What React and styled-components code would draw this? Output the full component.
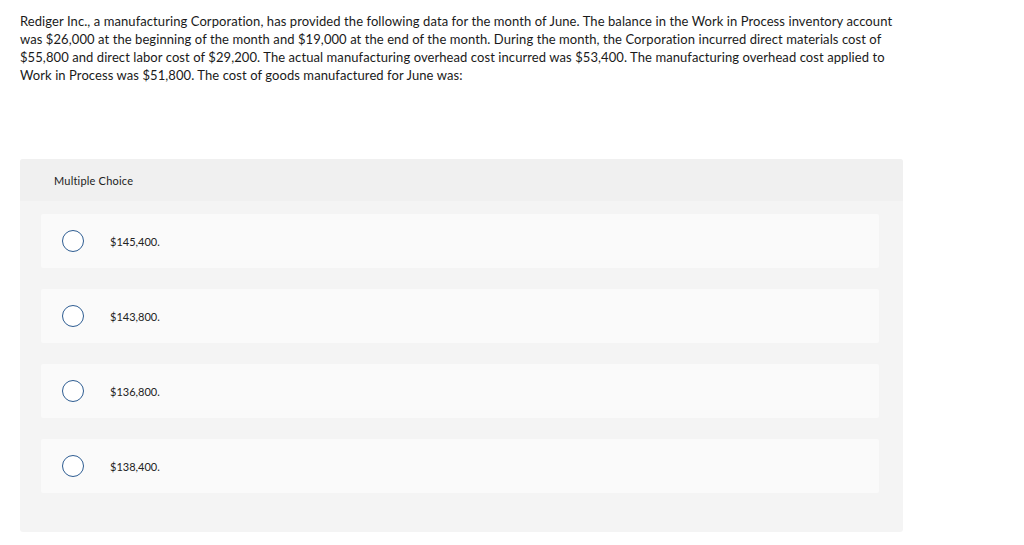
import styled, { createGlobalStyle } from "styled-components";

const GlobalStyle = createGlobalStyle`
  body {
    margin: 0;
    background: #ffffff;
    font-family: "Lato", "Liberation Sans", sans-serif;
    color: #1a1a1a;
  }
`;

const Page = styled.div`
  padding: 12px 20px 0 20px;
  width: 1024px;
  box-sizing: border-box;
`;

const Question = styled.p`
  margin: 0;
  width: 895px;
  font-size: 13px;
  line-height: 18px;
  letter-spacing: 0.08px;
  color: #1a1a1a;
`;

const Panel = styled.div`
  margin-top: 75px;
  width: 883px;
  background: #f4f4f4;
  border-radius: 3px;
  padding-bottom: 39px;
`;

const Header = styled.div`
  height: 42px;
  display: flex;
  align-items: center;
  padding-left: 34px;
  background: #f0f0f0;
  font-size: 11px;
  letter-spacing: 0.2px;
  color: #222;
  border-radius: 3px 3px 0 0;
`;

const Options = styled.div`
  display: flex;
  flex-direction: column;
  gap: 21px;
  padding: 13px 24px 0 21px;
`;

const Option = styled.label`
  height: 54px;
  display: flex;
  align-items: center;
  background: #fafafa;
  border-radius: 2px;
  padding-left: 21px;
  font-size: 11px;
  color: #222;
  cursor: pointer;
`;

const Radio = styled.span`
  width: 20px;
  height: 20px;
  border: 1px solid #2e5d92;
  border-radius: 50%;
  background: #fff;
  margin-right: 26px;
`;

const answers = ["$145,400.", "$143,800.", "$136,800.", "$138,400."];

export default function App() {
  return (
    <>
      <GlobalStyle />
      <Page>
        <Question>
          Rediger Inc., a manufacturing Corporation, has provided the following data for the month of June. The balance in the Work in Process inventory account was $26,000 at the beginning of the month and $19,000 at the end of the month. During the month, the Corporation incurred direct materials cost of $55,800 and direct labor cost of $29,200. The actual manufacturing overhead cost incurred was $53,400. The manufacturing overhead cost applied to Work in Process was $51,800. The cost of goods manufactured for June was:
        </Question>
        <Panel>
          <Header>Multiple Choice</Header>
          <Options>
            {answers.map((a) => (
              <Option key={a}>
                <Radio />
                {a}
              </Option>
            ))}
          </Options>
        </Panel>
      </Page>
    </>
  );
}
